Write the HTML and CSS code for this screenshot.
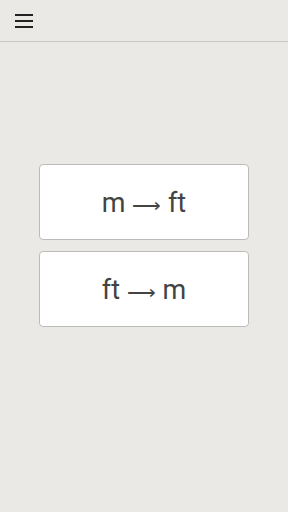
FILE: index.html
```html
<!DOCTYPE html>
<html>
<head>
    <title>Converter</title>
    <link rel="stylesheet" href="styles.css">
</head>
<body>
    <div class="header">
        <svg class="menu" width="18" height="14" viewBox="0 0 18 14">
            <rect x="0" y="0" width="18" height="2" fill="#222"/>
            <rect x="0" y="6" width="18" height="2" fill="#222"/>
            <rect x="0" y="12" width="18" height="2" fill="#222"/>
        </svg>
    </div>
    <div class="choices">
        <div class="choice">m <span class="arrow">&#x27F6;</span> ft</div>
        <div class="choice">ft <span class="arrow">&#x27F6;</span> m</div>
    </div>
</body>
</html>
```

FILE: styles.css
```css
html, body { margin: 0; padding: 0; }
body { font-family: Roboto, "Liberation Sans", sans-serif; background: #ebe9e6; height: 512px; }
.header { height: 41px; border-bottom: 1px solid #c9c7c4; display: flex; align-items: center; padding-left: 15px; }
.menu { display: block; }
.choices { display: flex; flex-direction: column; align-items: center; gap: 11px; padding-top: 122px; }
.choice { width: 208px; height: 72px; padding-top: 2px; background: #fff; border: 1px solid #bdbbb8; border-radius: 4px; display: flex; align-items: center; justify-content: center; font-size: 27px; color: #444; white-space: pre; }
.arrow { font-family: "Noto Sans", sans-serif; font-size: 20px; position: relative; top: 1px; }
```
